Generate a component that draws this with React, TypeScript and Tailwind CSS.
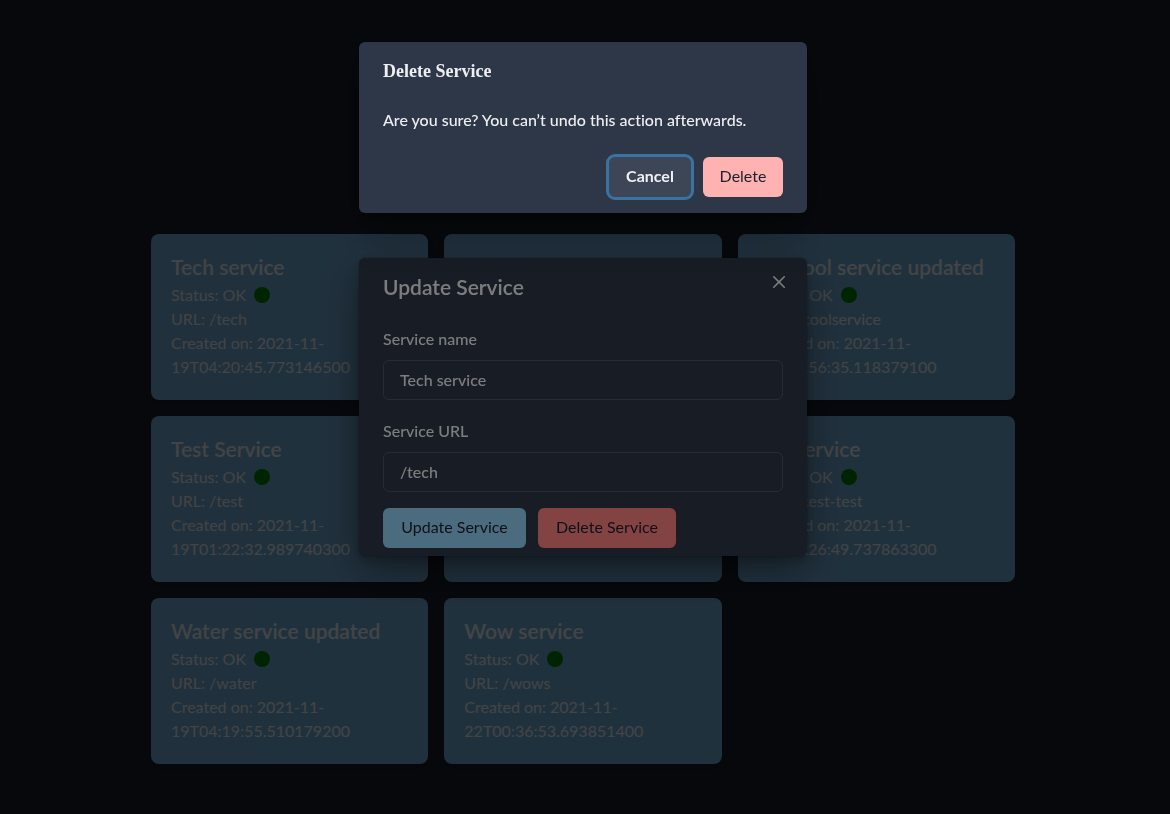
import { useId } from "react";

type Service = { name: string; status: string; url: string; created: string };

const services: (Service | null)[] = [
  { name: "Tech service", status: "OK", url: "/tech", created: "2021-11-19T04:20:45.773146500" },
  null,
  { name: "My cool service updated", status: "OK", url: "/coolservice", created: "2021-11-19T04:56:35.118379100" },
  { name: "Test Service", status: "OK", url: "/test", created: "2021-11-19T01:22:32.989740300" },
  null,
  { name: "My Service", status: "OK", url: "/test-test", created: "2021-11-19T01:26:49.737863300" },
  { name: "Water service updated", status: "OK", url: "/water", created: "2021-11-19T04:19:55.510179200" },
  { name: "Wow service", status: "OK", url: "/wows", created: "2021-11-22T00:36:53.693851400" },
];

function ServiceCard({ service }: { service: Service | null }) {
  return (
    <article className="rounded-lg bg-[#76b2e0] px-5 pt-[19px] pb-[21px] text-white/90 shadow-lg">
      {service && (
        <>
          <h2 className="pb-0.5 text-[21px] leading-7 font-semibold">{service.name}</h2>
          <p className="flex items-center gap-2">
            {`Status: ${service.status}`}
            <span className="size-4 rounded-full bg-[#008000]" />
          </p>
          <p>{`URL: ${service.url}`}</p>
          <p>{`Created on: ${service.created}`}</p>
        </>
      )}
    </article>
  );
}

function Field({ label, value }: { label: string; value: string }) {
  const id = useId();
  return (
    <div>
      <label htmlFor={id} className="mb-[10px] block leading-[22px] font-medium">
        {label}
      </label>
      <input
        id={id}
        defaultValue={value}
        className="block h-10 w-full rounded-md border border-white/15 bg-transparent px-4 pb-0.5 font-medium outline-none"
      />
    </div>
  );
}

function UpdateDialog() {
  return (
    <div className="fixed inset-0 flex items-start justify-center bg-black/48 pt-[258px] pr-1">
      <section
        role="dialog"
        aria-label="Update Service"
        className="relative w-full max-w-md rounded-md bg-[#2d3748] shadow-[0_0_0_1px_rgba(0,0,0,0.1),0_5px_10px_rgba(0,0,0,0.2),0_15px_40px_rgba(0,0,0,0.4)]"
      >
        <h2 className="px-6 pt-3.5 pb-[18px] text-[21px] leading-[30px] font-semibold">Update Service</h2>
        <button aria-label="Close" className="absolute top-2 right-3 flex size-8 items-center justify-center">
          <svg viewBox="0 0 24 24" className="size-3" fill="currentColor" aria-hidden="true">
            <path d="M.439 21.44a1.5 1.5 0 0 0 2.122 2.121l9.262-9.261a.25.25 0 0 1 .354 0l9.262 9.263a1.5 1.5 0 1 0 2.122-2.121L14.3 12.177a.25.25 0 0 1 0-.354l9.263-9.262A1.5 1.5 0 0 0 21.439.44L12.177 9.7a.25.25 0 0 1-.354 0L2.561.44A1.5 1.5 0 0 0 .439 2.561L9.7 11.823a.25.25 0 0 1 0 .354Z" />
          </svg>
        </button>
        <form className="px-6 py-2">
          <div className="flex flex-col gap-5">
            <Field label="Service name" value="Tech service" />
            <Field label="Service URL" value="/tech" />
          </div>
          <div className="mt-4 flex gap-3">
            <button type="button" className="h-10 min-w-[143px] rounded-md bg-[#90cdf4] px-4 pb-0.5 text-[#1a202c]">
              Update Service
            </button>
            <button type="button" className="h-10 min-w-[138px] rounded-md bg-[#fc8181] px-4 pb-0.5 text-[#1a202c]">
              Delete Service
            </button>
          </div>
        </form>
      </section>
    </div>
  );
}

function DeleteDialog() {
  return (
    <div className="fixed inset-0 flex items-start justify-center bg-black/48 pt-[42px] pr-1">
      <section
        role="alertdialog"
        aria-label="Delete Service"
        className="w-full max-w-md rounded-md bg-[#2d3748] shadow-[0_0_0_1px_rgba(0,0,0,0.1),0_5px_10px_rgba(0,0,0,0.2),0_15px_40px_rgba(0,0,0,0.4)]"
      >
        <h2 className="px-6 py-4 font-['Liberation_Serif',serif] text-lg leading-[27px] font-bold">Delete Service</h2>
        <p className="px-6 pt-[7px] pb-[9px] font-medium">Are you sure? You can’t undo this action afterwards.</p>
        <footer className="flex justify-end gap-3 px-6 py-4">
          <button className="h-10 min-w-[82px] rounded-md bg-white/8 px-4 pb-0.5 font-bold ring-3 ring-[#4299e1]/60">
            Cancel
          </button>
          <button className="h-10 min-w-20 rounded-md bg-[#feb2b2] px-4 pb-0.5 text-[#1a202c]">Delete</button>
        </footer>
      </section>
    </div>
  );
}

export default function App() {
  return (
    <div className="min-h-screen bg-[#1a202c] font-[Lato,sans-serif] text-base text-white/92 [font-variant-ligatures:none]">
      <main className="pt-[234px] pr-5 pb-12 pl-4">
        <div className="mx-auto grid max-w-[864px] grid-cols-3 gap-4">
          {services.map((service, index) => (
            <ServiceCard key={index} service={service} />
          ))}
        </div>
      </main>
      <UpdateDialog />
      <DeleteDialog />
    </div>
  );
}
